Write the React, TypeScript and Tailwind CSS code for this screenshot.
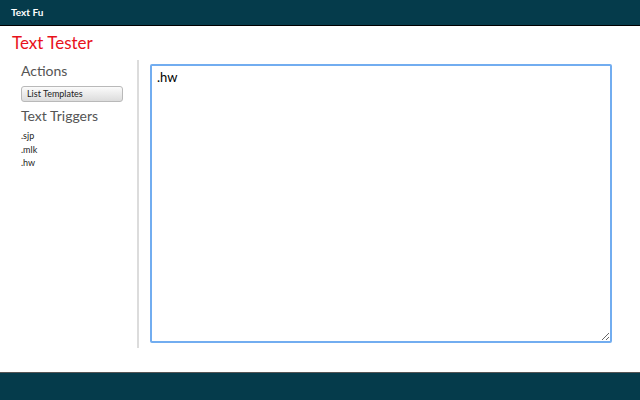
import React, { useState } from 'react'

export default function App() {
  const [text, setText] = useState('.hw')
  const triggers = ['.sjp', '.mlk', '.hw']

  return (
    <div className="flex h-[400px] w-[640px] flex-col bg-white font-['Lato',sans-serif]">
      <div className="flex h-[26px] items-center border-b border-black bg-[#053b4b] px-[11px]">
        <span className="text-[10px] font-bold text-white">Text Fu</span>
      </div>

      <div className="flex-1">
        <h1 className="ml-[12px] mt-[7px] text-[17px] leading-[20px] text-[#e8111a]">Text Tester</h1>

        <div className="mt-[7px] flex">
          <div className="w-[137px] pl-[21px]">
            <h2 className="mt-[3px] text-[14px] leading-[16px] text-[#555]">Actions</h2>
            <button className="mt-[7px] h-[16px] w-[102px] rounded-[3px] border border-[#b9b9b9] bg-gradient-to-b from-[#fbfbfb] to-[#dcdcdc] pl-[5px] text-left text-[9px] leading-[14px] text-[#222]">
              List Templates
            </button>
            <h2 className="mt-[5px] text-[14px] leading-[16px] text-[#555]">Text Triggers</h2>
            <ul className="mt-[5px] text-[9px] leading-[13.5px] text-[#222]">
              {triggers.map(t => (
                <li key={t}>{t}</li>
              ))}
            </ul>
          </div>

          <div className="h-[288px] w-[2px] bg-[#dcdcdc]" />

          <div className="pl-[11px] pt-[4px]">
            <textarea
              value={text}
              onChange={e => setText(e.target.value)}
              className="h-[279px] w-[462px] resize-y rounded-[2px] border-2 border-[#72adf0] px-[5px] py-[2px] text-[13px] text-black outline-none font-['Lato',sans-serif]"
            />
          </div>
        </div>
      </div>

      <div className="h-[28px] border-t border-[#555] bg-[#053b4b]" />
    </div>
  )
}
